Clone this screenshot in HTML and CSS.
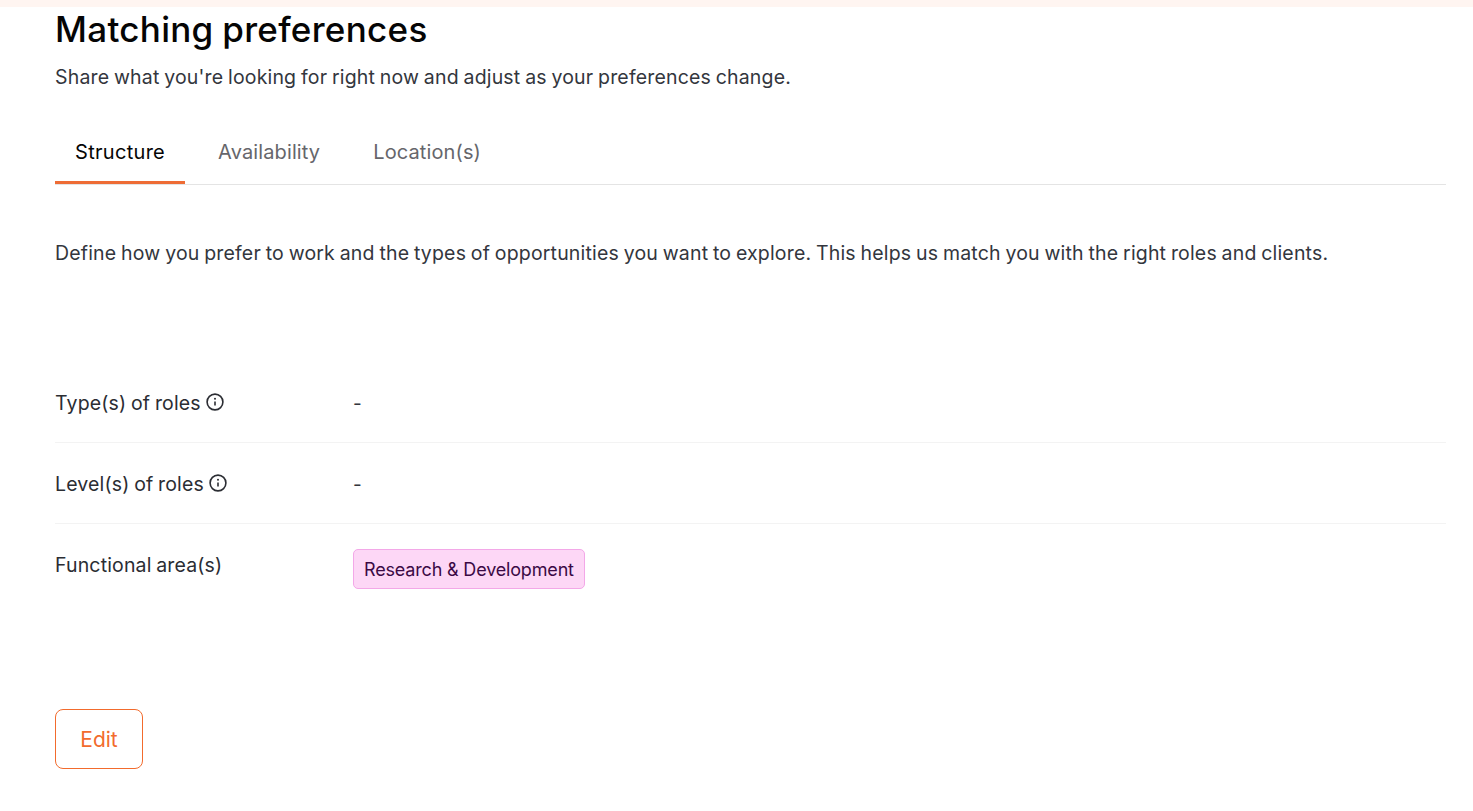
FILE: index.html
```html
<!DOCTYPE html>
<html lang="en">
<head>
<meta charset="utf-8">
<title>Matching preferences</title>
<link rel="stylesheet" href="styles.css">
</head>
<body>
<div class="strip"></div>
<main class="page">
  <h1 class="title">Matching preferences</h1>
  <p class="subtitle">Share what you're looking for right now and adjust as your preferences change.</p>
  <nav class="tabs">
    <a class="tab tab-active">Structure</a>
    <a class="tab">Availability</a>
    <a class="tab">Location(s)</a>
  </nav>
  <p class="intro">Define how you prefer to work and the types of opportunities you want to explore. This helps us match you with the right roles and clients.</p>
  <section class="rows">
    <div class="row">
      <div class="label">Type(s) of roles
        <svg class="info" viewBox="0 0 18 18" width="18" height="18"><circle cx="9" cy="9" r="7.9"/><path d="M9 8.4v4.2"/><circle class="dot" cx="9" cy="5.7" r="1"/></svg>
      </div>
      <div class="value">-</div>
    </div>
    <div class="row">
      <div class="label">Level(s) of roles
        <svg class="info" viewBox="0 0 18 18" width="18" height="18"><circle cx="9" cy="9" r="7.9"/><path d="M9 8.4v4.2"/><circle class="dot" cx="9" cy="5.7" r="1"/></svg>
      </div>
      <div class="value">-</div>
    </div>
    <div class="row row-last">
      <div class="label">Functional area(s)</div>
      <div class="value"><span class="chip">Research &amp; Development</span></div>
    </div>
  </section>
  <button class="edit" type="button">Edit</button>
</main>
</body>
</html>
```

FILE: styles.css
```css
* { box-sizing: border-box; }
html, body { margin: 0; padding: 0; background: #fff; }
body { font-family: Inter, "Noto Sans", sans-serif; color: #2b2d33; height: 811px; overflow: hidden; }
.strip { height: 7px; background: #fff5f1; }
.page { padding: 0 27px 0 55px; }
.title { margin: 0; font-size: 35px; line-height: 44px; font-weight: 500; color: #050505; letter-spacing: 0.3px; word-spacing: -1px; }
.subtitle { margin: 12px 0 0; font-size: 19.5px; line-height: 28px; letter-spacing: 0.17px; word-spacing: -0.9px; color: #33363d; }
.tabs { display: flex; gap: 13px; margin-top: 34px; border-bottom: 1px solid #e4e4e4; height: 60px; }
.tab { padding: 0 20px; font-size: 20px; line-height: 54px; letter-spacing: 0.12px; color: #66666b; height: 59px; }
.tab-active { color: #050505; letter-spacing: 0.3px; border-bottom: 3px solid #ee6c35; }
.intro { margin: 54px 0 0; font-size: 19.5px; line-height: 28px; letter-spacing: 0.17px; word-spacing: -0.9px; color: #33363d; white-space: nowrap; }
.rows { margin-top: 95px; }
.row { display: flex; height: 81px; border-bottom: 1px solid #f3f3f3; padding-top: 27px; }
.row-last { border-bottom: 0; height: 78px; }
.label { width: 298px; display: flex; align-items: flex-start; gap: 5px; font-size: 19.5px; line-height: 28px; letter-spacing: 0.15px; word-spacing: -0.9px; color: #2b2d33; }
.info { margin-top: 4px; fill: none; stroke: #2b2d33; stroke-width: 1.6; }
.info .dot { fill: #2b2d33; stroke: none; }
.value { padding-top: 1px; font-size: 19px; line-height: 28px; color: #33363d; }
.chip { display: block; margin-top: -3px; padding: 0 10px; height: 40px; line-height: 40px; border: 1px solid #f3a8e8; border-radius: 5px; background: #fdd7f6; color: #3b0a45; font-size: 18px; letter-spacing: -0.17px; white-space: nowrap; }
.edit { display: block; margin-top: 107px; width: 88px; height: 60px; padding: 0; background: #fff; border: 1px solid #f26b2d; border-radius: 8px; color: #f26b2d; font-family: inherit; font-size: 21px; }
```
